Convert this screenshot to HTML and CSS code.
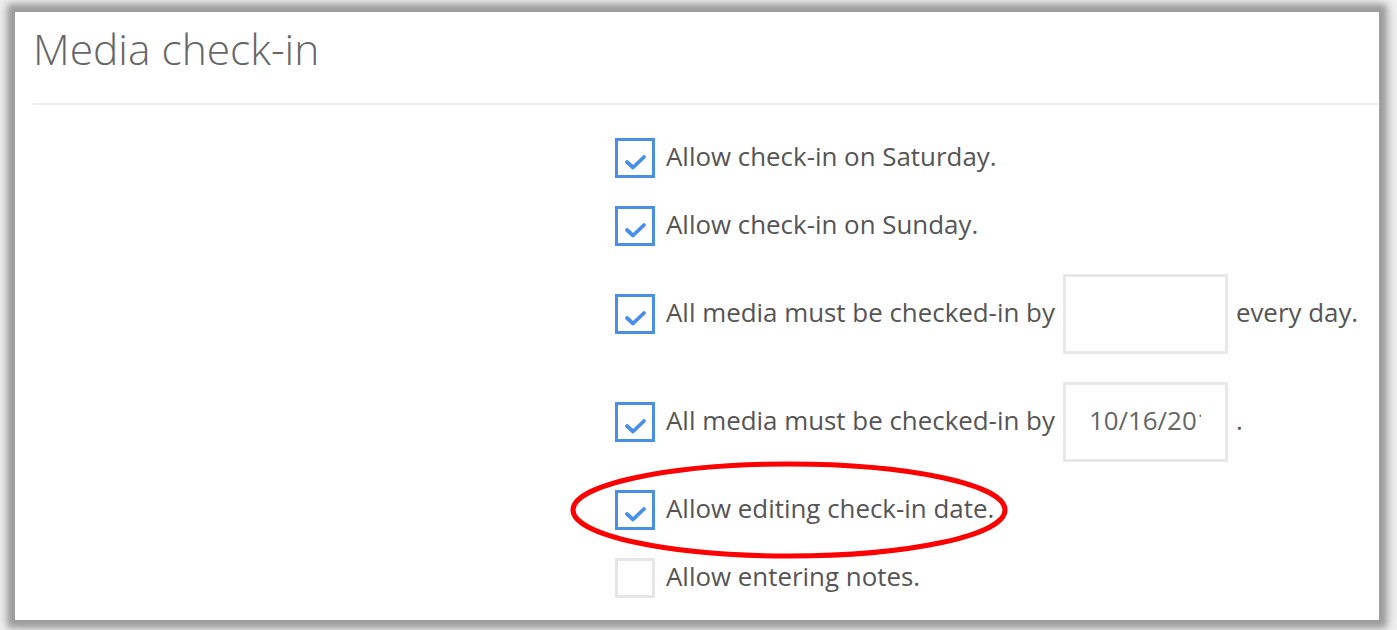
FILE: index.html
```html
<!DOCTYPE html>
<html>
<head>
<meta charset="utf-8">
<link rel="stylesheet" href="styles.css">
</head>
<body>
<div class="frame">
  <h1 class="title">Media check-in</h1>
  <div class="rule"></div>
  <div class="options">
    <div class="row">
      <span class="cb on"><svg viewBox="0 0 40 40"><path d="M12 24 L18 29.5 L29 19" /></svg></span>
      <span class="lbl">Allow check-in on Saturday.</span>
    </div>
    <div class="row">
      <span class="cb on"><svg viewBox="0 0 40 40"><path d="M12 24 L18 29.5 L29 19" /></svg></span>
      <span class="lbl">Allow check-in on Sunday.</span>
    </div>
    <div class="row">
      <span class="cb on"><svg viewBox="0 0 40 40"><path d="M12 24 L18 29.5 L29 19" /></svg></span>
      <span class="lbl">All media must be checked-in by</span>
      <span class="field"></span>
      <span class="lbl">every day.</span>
    </div>
    <div class="row">
      <span class="cb on"><svg viewBox="0 0 40 40"><path d="M12 24 L18 29.5 L29 19" /></svg></span>
      <span class="lbl">All media must be checked-in by</span>
      <span class="field"><span class="val">10/16/2019</span></span>
      <span class="lbl">.</span>
    </div>
    <div class="row highlight">
      <span class="cb on"><svg viewBox="0 0 40 40"><path d="M12 24 L18 29.5 L29 19" /></svg></span>
      <span class="lbl">Allow editing check-in date.</span>
      <svg class="ring" viewBox="0 0 440 100"><ellipse cx="220" cy="50" rx="216" ry="46" /></svg>
    </div>
    <div class="row">
      <span class="cb"></span>
      <span class="lbl">Allow entering notes.</span>
    </div>
  </div>
</div>
</body>
</html>
```

FILE: styles.css
```css
html, body {
  margin: 0;
  padding: 0;
  background: #f4f4f4;
}
body {
  width: 1397px;
  height: 630px;
  overflow: hidden;
  font-family: "Open Sans", "Liberation Sans", sans-serif;
}
.frame {
  margin: 12px 0 0 15px;
  width: 1364px;
  height: 608px;
  background: #fff;
  box-shadow: 0 0 6px 7px #9c9c9c, 0 0 14px 10px #c8c8c8;
  overflow: hidden;
}
.title {
  margin: 0;
  padding: 6px 0 0 18px;
  height: 62px;
  font-weight: 300;
  font-size: 42.5px;
  line-height: 62px;
  color: #666;
}
.rule {
  margin: 23px 0 0 18px;
  height: 2px;
  background: #eeeeee;
}
.options {
  margin: 33px 0 0 600px;
  display: flex;
  flex-direction: column;
  gap: 28px;
}
.row {
  display: flex;
  align-items: center;
  position: relative;
  min-height: 40px;
}
.cb {
  width: 34px;
  height: 34px;
  border: 3px solid #e6e6e6;
  flex: none;
  position: relative;
}
.cb.on {
  border-color: #4a8fe6;
}
.cb svg {
  position: absolute;
  left: -3px;
  top: -3px;
  width: 40px;
  height: 40px;
}
.cb svg path {
  fill: none;
  stroke: #4a8fe6;
  stroke-width: 3.8;
  stroke-linecap: round;
  stroke-linejoin: round;
}
.lbl {
  margin-left: 11px;
  padding-bottom: 5px;
  font-size: 25.9px;
  line-height: 30px;
  color: #555;
  white-space: nowrap;
}
.field {
  margin-left: 8px;
  width: 159px;
  height: 74px;
  border: 3px solid #e8e8e8;
  display: flex;
  align-items: center;
  overflow: hidden;
  flex: none;
}
.field + .lbl {
  margin-left: 8px;
}
.val {
  margin-left: 23px;
  padding-bottom: 5px;
  font-size: 25.9px;
  line-height: 30px;
  color: #666;
  white-space: nowrap;
  width: 112px;
  overflow: hidden;
}
.ring {
  position: absolute;
  left: -46px;
  top: -30px;
  width: 440px;
  height: 100px;
  overflow: visible;
}
.ring ellipse {
  fill: none;
  stroke: #ff0000;
  stroke-width: 5;
}
```
